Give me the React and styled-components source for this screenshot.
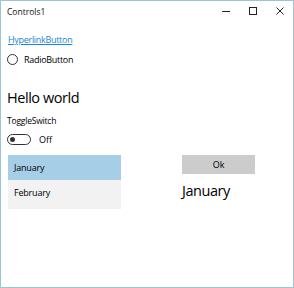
import React from "react";
import styled, { createGlobalStyle } from "styled-components";

const Global = createGlobalStyle`
  html, body { margin: 0; padding: 0; background: #fff; }
  body { font-family: "Open Sans", "Noto Sans", sans-serif; color: #000; }
`;

const Window = styled.div`
  box-sizing: border-box;
  width: 294px;
  height: 288px;
  border: 1px solid #9dc3d7;
  background: #fff;
  display: flex;
  flex-direction: column;
`;

const TitleBar = styled.div`
  height: 20px;
  display: flex;
  align-items: center;
  padding-left: 6px;
`;

const Title = styled.div`
  flex: 1;
  font-size: 8.5px;
  color: #111;
`;

const Caption = styled.div`
  width: 27px;
  height: 20px;
  display: flex;
  align-items: center;
  justify-content: center;
`;

const Body = styled.div`
  flex: 1;
  display: flex;
  padding: 12px 0 0 6px;
`;

const LeftCol = styled.div`
  width: 114px;
  display: flex;
  flex-direction: column;
`;

const RightCol = styled.div`
  display: flex;
  flex-direction: column;
  padding: 122px 0 0 61px;
`;

const Link = styled.a`
  font-size: 9px;
  letter-spacing: -0.3px;
  color: #1a86d4;
  text-decoration: underline;
  line-height: 14px;
  padding-left: 1px;
`;

const RadioRow = styled.div`
  display: flex;
  align-items: center;
  margin-top: 5px;
  height: 14px;
  font-size: 9px;
  letter-spacing: -0.3px;
  gap: 6px;
`;

const RadioCircle = styled.span`
  box-sizing: border-box;
  width: 11px;
  height: 11px;
  border: 1.3px solid #333;
  border-radius: 50%;
`;

const Heading = styled.div`
  font-size: 14.5px;
  letter-spacing: -0.45px;
  line-height: 20px;
  margin-top: 22px;
`;

const Label = styled.div`
  font-size: 8.5px;
  letter-spacing: -0.2px;
  line-height: 12px;
  margin-top: 7px;
`;

const ToggleRow = styled.div`
  display: flex;
  align-items: center;
  gap: 8px;
  margin-top: 6px;
  height: 12px;
  font-size: 9px;
`;

const Track = styled.span`
  box-sizing: border-box;
  width: 24px;
  height: 11px;
  border: 1.3px solid #333;
  border-radius: 6px;
  display: flex;
  align-items: center;
  padding-left: 2px;
`;

const Knob = styled.span`
  width: 5px;
  height: 5px;
  border-radius: 50%;
  background: #333;
`;

const List = styled.div`
  margin: 10px 0 0 1px;
  display: flex;
  flex-direction: column;
  background: #f2f2f2;
  padding-bottom: 4px;
`;

const Item = styled.div`
  height: 25px;
  display: flex;
  align-items: center;
  padding-left: 6px;
  font-size: 9px;
  letter-spacing: -0.2px;
  background: ${(p) => (p.$selected ? "#a6cee6" : "transparent")};
`;

const OkButton = styled.button`
  width: 73px;
  height: 19px;
  border: none;
  background: #cccccc;
  font-family: inherit;
  font-size: 9px;
  color: #000;
  padding: 0;
`;

const Result = styled.div`
  font-size: 14.5px;
  letter-spacing: -0.45px;
  line-height: 20px;
  margin-top: 7px;
`;

export default function App() {
  return (
    <>
      <Global />
      <Window>
        <TitleBar>
          <Title>Controls1</Title>
          <Caption>
            <svg width="10" height="10" viewBox="0 0 10 10">
              <line x1="1" y1="5.5" x2="9" y2="5.5" stroke="#222" strokeWidth="1" />
            </svg>
          </Caption>
          <Caption>
            <svg width="10" height="10" viewBox="0 0 10 10">
              <rect x="1.5" y="1.5" width="7" height="7" fill="none" stroke="#222" strokeWidth="1" />
            </svg>
          </Caption>
          <Caption>
            <svg width="10" height="10" viewBox="0 0 10 10">
              <path d="M1.5 1.5 L8.5 8.5 M8.5 1.5 L1.5 8.5" stroke="#222" strokeWidth="1" />
            </svg>
          </Caption>
        </TitleBar>
        <Body>
          <LeftCol>
            <Link>HyperlinkButton</Link>
            <RadioRow>
              <RadioCircle />
              RadioButton
            </RadioRow>
            <Heading>Hello world</Heading>
            <Label>ToggleSwitch</Label>
            <ToggleRow>
              <Track>
                <Knob />
              </Track>
              Off
            </ToggleRow>
            <List>
              <Item $selected>January</Item>
              <Item>February</Item>
            </List>
          </LeftCol>
          <RightCol>
            <OkButton>Ok</OkButton>
            <Result>January</Result>
          </RightCol>
        </Body>
      </Window>
    </>
  );
}
